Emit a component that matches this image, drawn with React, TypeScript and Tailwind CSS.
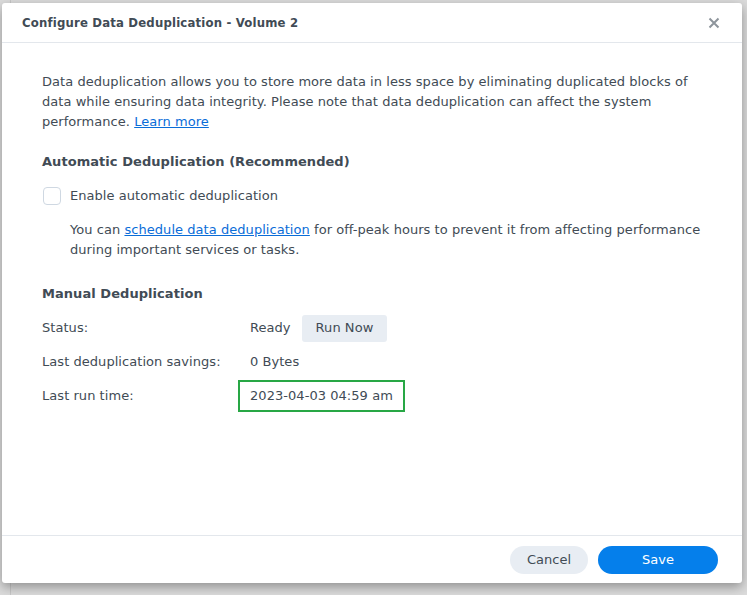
import React from "react";

export default function App() {
  return (
    <div className="w-[747px] h-[595px] bg-[#dcdcdc] relative overflow-hidden" style={{ fontFamily: '"DejaVu Sans", Verdana, sans-serif' }}>
      <div className="absolute left-[10px] top-0 bottom-0 w-px bg-[#c8c8c8]" />
      <div className="absolute left-[2px] top-[3px] w-[740px] h-[580px] bg-white rounded-[3px] shadow-[0_4px_12px_rgba(0,0,0,0.35)] flex flex-col text-[#414b55]">
        <div className="h-[40px] flex items-center justify-between px-[20px] border-b border-[#e3e7ec] shrink-0">
          <div className="text-[13px] font-bold text-[#414b55] tracking-[0.18px]" style={{ fontFamily: '"DejaVu Sans Condensed", "DejaVu Sans", sans-serif' }}>
            Configure Data Deduplication - Volume 2
          </div>
          <svg width="12" height="12" viewBox="0 0 12 12" className="mr-[2px]">
            <path d="M1.5 1.5 L10.5 10.5 M10.5 1.5 L1.5 10.5" stroke="#8e959c" strokeWidth="2" />
          </svg>
        </div>
        <div className="flex-1 px-[40px] pt-[29px] text-[13px] leading-[20px] tracking-[0.05px]">
          <p>
            Data deduplication allows you to store more data in less space by eliminating duplicated blocks of data while ensuring data integrity. Please note that data deduplication can affect the system performance.{" "}
            <a className="text-[#0a6dd8] underline">Learn more</a>
          </p>
          <div className="font-bold mt-[20px]">Automatic Deduplication (Recommended)</div>
          <div className="flex items-center mt-[14px] h-[20px]">
            <div className="w-[18px] h-[18px] border border-[#cfd8e2] rounded-[4px] ml-px bg-white" />
            <span className="ml-[9px]">Enable automatic deduplication</span>
          </div>
          <p className="mt-[14px] ml-[28px]">
            You can <a className="text-[#0a6dd8] underline">schedule data deduplication</a> for off-peak hours to prevent it from affecting performance during important services or tasks.
          </p>
          <div className="font-bold mt-[24px]">Manual Deduplication</div>
          <div className="flex flex-col mt-[7px]">
            <div className="flex items-center h-[34px]">
              <div className="w-[208px]">Status:</div>
              <span>Ready</span>
              <button className="ml-[11px] h-[27px] px-[14px] rounded-[3px] bg-[#e8edf3] text-[#414b55] tracking-[0.05px]">Run Now</button>
            </div>
            <div className="flex items-center h-[34px]">
              <div className="w-[208px]">Last deduplication savings:</div>
              <span>0 Bytes</span>
            </div>
            <div className="flex items-center h-[34px]">
              <div className="w-[208px]">Last run time:</div>
              <span className="inline-flex items-center h-[32px] -ml-[12px] px-[10px] border-2 border-[#28a745]">2023-04-03 04:59 am</span>
            </div>
          </div>
        </div>
        <div className="h-[48px] border-t border-[#e3e7ec] flex items-center justify-end pr-[24px] gap-[10px] shrink-0 text-[13px]">
          <button className="w-[78px] h-[28px] rounded-full bg-[#e8edf3] text-[#414b55]">Cancel</button>
          <button className="w-[120px] h-[28px] rounded-full bg-[#057feb] text-white">Save</button>
        </div>
      </div>
    </div>
  );
}
